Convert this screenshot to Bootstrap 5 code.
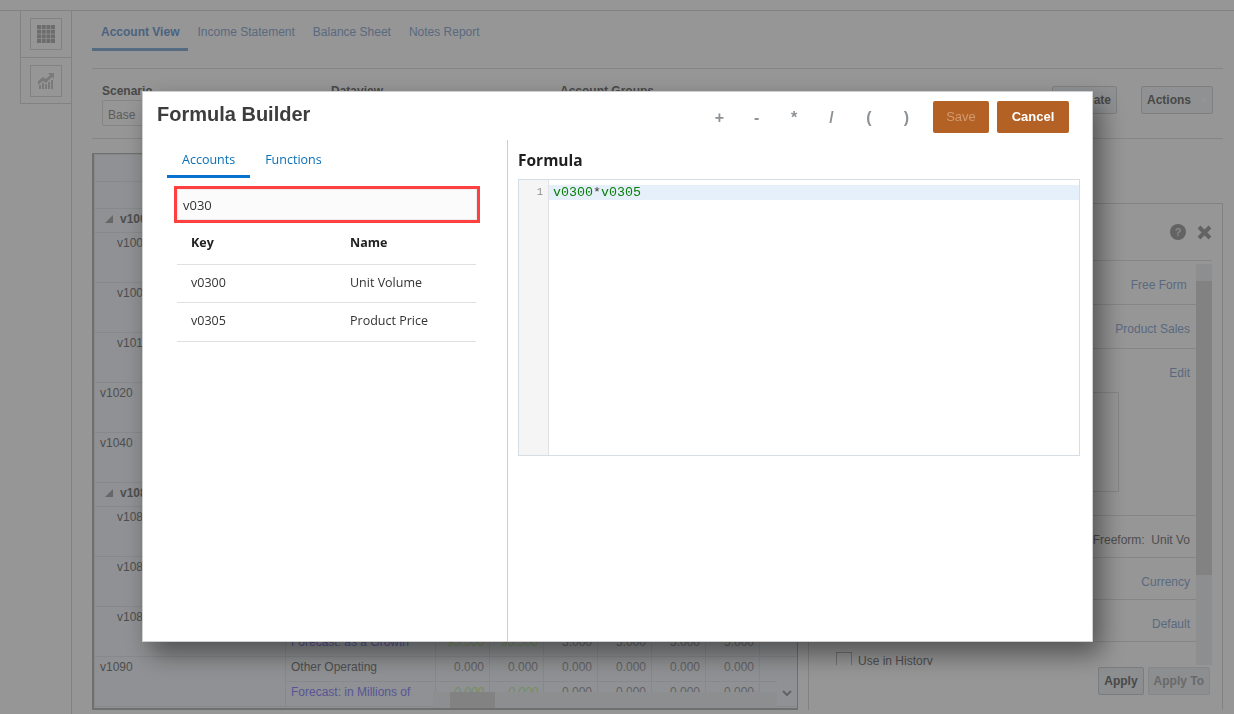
<!DOCTYPE html>
<html lang="en">
<head>
<meta charset="utf-8">
<title>Formula Builder</title>
<link href="https://cdn.jsdelivr.net/npm/bootstrap@5.3.0/dist/css/bootstrap.min.css" rel="stylesheet">
<style>
html,body{height:714px;overflow:hidden}
body{background:#fff;font-family:"Liberation Sans",Arial,sans-serif;font-size:12px;color:#868686;padding-top:10px}
.shell{height:704px;border-top:1px solid #dedede}
.rail{width:51px;height:93px;margin-left:20px;border-left:1px solid #dedede;border-bottom:1px solid #dedede;flex:none}
.rail-cell{height:46px}
.rail-cell+.rail-cell{border-top:1px solid #dedede}
.rail-box{width:32px;height:32px;border:1px solid #dedede}
.main-area{width:1152px;border-left:1px solid #dedede;border-right:0;padding-left:20px;height:703px}
.top-tabs{height:58px;border-bottom:1px solid #e3e3e3;padding-top:13px;gap:0}
.top-tab{padding:0 9px;height:27px;line-height:17px;color:#98b4d8;font-size:12px;white-space:nowrap}
.top-tab.on{color:#7fa9d8;font-weight:700;border-bottom:3px solid #8fb6de}
.filter-bar{height:70px;border-bottom:1px solid #e3e3e3;padding:13px 10px 0;width:1131px}
.flt{width:229px;font-weight:700;color:#7c7c7c;font-size:12px}
.flt-sel{width:120px;height:26px;border:1px solid #e3e3e3;border-radius:2px;padding:5px;color:#9c9c9c;font-weight:400}
.act-btn{height:28px;border:1px solid #d8d8d8;border-radius:2px;background:#f5f7f9;color:#7c7c7c;font-weight:700;font-size:12px;padding:0 5px;display:flex;align-items:center;gap:10px}
.content-row{padding-top:14px;width:1131px;gap:10px}
.grid-wrap{width:706px;height:557px;border:1px solid #bcbebe;border-width:1px 1px 2px 2px;overflow:hidden;background:#f4f7fb;flex:none}
.acct{border-collapse:collapse;table-layout:fixed;width:704px}
.acct td{border:1px solid #e6e8ec;padding:3px 5px 0;vertical-align:top;overflow:hidden;white-space:nowrap;height:25px;font-size:12px;line-height:15px}
.acct tr.hd td{height:27px}
.acct tr.grp td{height:24px;font-weight:700;padding-left:24px}
.acct .ind{padding-left:22px}
.acct .num{text-align:right;color:#a8a8a8}
.acct .fc{color:#9890ff}
.acct .gr{color:#c8f0a4;font-style:italic}
.tri{display:inline-block;width:0;height:0;border-left:8px solid transparent;border-bottom:8px solid #b0b0b0;margin:0 7px 0 -14px}
.bar-h{position:absolute;left:339px;right:20px;bottom:0;height:16px;background:#eef1f4}
.bar-h i{position:absolute;left:17px;top:0;width:45px;height:16px;background:#dedede}
.bar-v{position:absolute;right:0;top:520px;bottom:16px;width:20px;text-align:center;background:#f4f7fb}
.pane{flex:1;height:507px;margin-top:50px;border:1px solid #dedede;border-bottom:0;position:relative}
.pane-head{height:56px;padding-right:10px;gap:11px}
.pane-body{height:405px;overflow:hidden;margin-right:10px;position:relative}
.pane-row{border-top:1px solid #e3e3e3;padding-right:22px;text-align:right;color:#98b4d8;height:44px;padding-top:15px;margin-left:20px}
.pane-row.plain{color:#868686}
.edit-box{width:170px;height:100px;border:1px solid #e3e3e3;margin:10px 0 0 120px}
.hist{padding:10px 0 0 7px;color:#868686;margin-left:20px;border-top:1px solid #e3e3e3;gap:6px}
.hist i{display:block;width:16px;height:16px;border:1px solid #bcbebe}
.bar-r{position:absolute;right:0;top:4px;bottom:0;width:16px;background:#f0f2f4}
.bar-r b{position:absolute;left:0;right:0;top:17px;height:294px;background:#dedede}
.pane-foot{padding:2px 12px 0 0;gap:4px}
.foot-btn{height:28px;border:1px solid #d0d4d8;border-radius:2px;background:#eef1f4;color:#7c7c7c;font-weight:700;padding:0 5px;font-size:12px;line-height:26px}
.foot-btn.off{color:#b4b4b4;border-color:#e6e6e6}
.scrim{position:fixed;inset:0;background:rgba(0,0,0,.41)}
.fb-modal{position:fixed;left:142px;top:91px;width:951px;height:551px;background:#fff;border:1px solid #cfcfcf;border-radius:0;box-shadow:8px 12px 24px rgba(0,0,0,.45);color:#333;font-family:"Open Sans","Noto Sans",sans-serif}
.fb-top{height:48px;padding:9px 23px 0 14px}
.fb-title{font:700 20px/26px "Liberation Sans",Arial,sans-serif;color:#3d3d3d;margin:0}
.ops{font:700 16px/20px "Liberation Sans",Arial,sans-serif;color:#8c9296;margin-top:7px;margin-right:0}
.ops span{width:37.4px;text-align:center}
.fb-btn{height:32px;border:0;border-radius:2px;background:#b46126;font:700 13px/32px "Liberation Sans",Arial,sans-serif;color:#fff;padding:0;text-align:center}
.fb-btn.save{width:56px;color:#d39a70;font-weight:400;margin:0 8px 0 0}
.fb-btn.cancel{width:72px}
.fb-body{height:501px}
.fb-left{width:365px;border-right:1px solid #c6ced0;padding:0 0 0 24px;flex:none}
.fb-tabs{gap:0;height:38px;font-size:12.5px;color:#0572ce}
.fb-tab{padding:11px 15px 0;height:38px;line-height:18px;color:#0a6fb5}
.fb-tab.on{border-bottom:3px solid #0572ce}
.fb-search{display:block;width:306px;height:37px;margin:8px 0 0 7px;border:3px solid #ff4040;background:#fbfbfb;box-shadow:inset 0 0 0 1px #ececec;font:13px/31px "Open Sans",sans-serif;color:#333;padding:0 6px;outline:0}
.fb-table{width:299px;margin-left:10px;border-collapse:collapse;font-size:12.5px;color:#333}
.fb-table th,.fb-table td{border-bottom:1px solid #e0e0e0;padding:0 14px;height:38.5px;font-weight:400}
.fb-table th{font-weight:700;height:41px;color:#222;padding-top:0}
.fb-table .c1{width:159px}
.fb-right{padding:0 12px 0 10px;flex:1}
.fb-h{font:700 15.5px/20px "Open Sans",sans-serif;color:#1f1f1f;margin:10px 0 9px}
.editor{width:562px;height:277px;border:1px solid #d5dde5;background:#fff;padding-top:0}
.gutter{width:30px;border-right:1px solid #dfe3e6;background:#f5f5f5;text-align:right;padding:5px 5px 0 0;font:10.5px/15px "Liberation Mono",monospace;color:#8d8d8d;flex:none}
.code-pane{flex:1;padding-top:5px}
.code-line{height:15px;background:#e6f0fb;padding-left:4px;font:13.33px/15px "Liberation Mono",monospace;color:#0a7d0a}
.code-line b{color:#333;font-weight:400}
</style>
</head>
<body>
<div class="shell d-flex">
  <div class="rail">
    <div class="rail-cell d-flex align-items-center justify-content-center">
      <div class="rail-box d-flex align-items-center justify-content-center">
        <svg width="18" height="18" viewBox="0 0 18 18" fill="#b9b9b9"><rect width="4" height="4"/><rect x="4.7" width="4" height="4"/><rect x="9.4" width="4" height="4"/><rect x="14" width="4" height="4"/><rect y="4.7" width="4" height="4"/><rect x="4.7" y="4.7" width="4" height="4"/><rect x="9.4" y="4.7" width="4" height="4"/><rect x="14" y="4.7" width="4" height="4"/><rect y="9.4" width="4" height="4"/><rect x="4.7" y="9.4" width="4" height="4"/><rect x="9.4" y="9.4" width="4" height="4"/><rect x="14" y="9.4" width="4" height="4"/><rect y="14" width="4" height="4"/><rect x="4.7" y="14" width="4" height="4"/><rect x="9.4" y="14" width="4" height="4"/><rect x="14" y="14" width="4" height="4"/></svg>
      </div>
    </div>
    <div class="rail-cell d-flex align-items-center justify-content-center">
      <div class="rail-box d-flex align-items-center justify-content-center">
        <svg width="18" height="17" viewBox="0 0 18 17" fill="#d0d0d0"><path d="M1 9l5-4 3 2 4-4-2-2h6v6l-2-2-6 6-3-2-5 4z"/><rect x="2" y="13" width="2" height="4"/><rect x="5" y="11" width="2" height="6"/><rect x="8" y="12" width="2" height="5"/><rect x="11" y="10" width="2" height="7"/><rect x="14" y="8" width="2" height="9"/></svg>
      </div>
    </div>
  </div>
  <div class="main-area">
    <div class="top-tabs d-flex">
      <div class="top-tab on">Account View</div>
      <div class="top-tab">Income Statement</div>
      <div class="top-tab">Balance Sheet</div>
      <div class="top-tab">Notes Report</div>
    </div>
    <div class="filter-bar d-flex">
      <div class="flt">Scenario<div class="flt-sel">Base</div></div>
      <div class="flt">Dataview</div>
      <div class="flt">Account Groups</div>
      <div class="ms-auto d-flex gap-4 pe-0 align-items-start">
        <div class="act-btn mt-1">Calculate</div>
        <div class="act-btn mt-1">Actions <span class="text-white-50">▾</span></div>
      </div>
    </div>
    <div class="content-row d-flex">
      <div class="grid-wrap position-relative">
        <table class="acct">
          <colgroup><col style="width:191px"><col style="width:150px"><col style="width:54px"><col style="width:54px"><col style="width:54px"><col style="width:54px"><col style="width:54px"><col style="width:54px"><col></colgroup>
          <tr class="hd"><td colspan="9"></td></tr>
          <tr class="hd"><td colspan="9"></td></tr>
          <tr class="grp"><td colspan="9"><span class="tri"></span>v1000</td></tr>
          <tr><td rowspan="2" class="ind">v1000</td><td colspan="8"></td></tr><tr><td colspan="8"></td></tr>
          <tr><td rowspan="2" class="ind">v1005</td><td colspan="8"></td></tr><tr><td colspan="8"></td></tr>
          <tr><td rowspan="2" class="ind">v1010</td><td colspan="8"></td></tr><tr><td colspan="8"></td></tr>
          <tr><td rowspan="2">v1020</td><td colspan="8"></td></tr><tr><td colspan="8"></td></tr>
          <tr><td rowspan="2">v1040</td><td colspan="8"></td></tr><tr><td colspan="8"></td></tr>
          <tr class="grp"><td colspan="9"><span class="tri"></span>v1080</td></tr>
          <tr><td rowspan="2" class="ind">v1081</td><td colspan="8"></td></tr><tr><td colspan="8"></td></tr>
          <tr><td rowspan="2" class="ind">v1082</td><td colspan="8"></td></tr><tr><td colspan="8"></td></tr>
          <tr><td rowspan="2" class="ind">v1083</td><td colspan="8"></td></tr>
          <tr><td class="fc">Forecast: as a Growth</td><td class="num gr">95.500</td><td class="num gr">95.500</td><td class="num">5.000</td><td class="num">5.000</td><td class="num">5.000</td><td class="num">5.000</td><td></td></tr>
          <tr><td rowspan="2">v1090</td><td>Other Operating</td><td class="num">0.000</td><td class="num">0.000</td><td class="num">0.000</td><td class="num">0.000</td><td class="num">0.000</td><td class="num">0.000</td><td></td></tr>
          <tr><td class="fc">Forecast: in Millions of</td><td class="num gr">0.000</td><td class="num gr">0.000</td><td class="num">0.000</td><td class="num">0.000</td><td class="num">0.000</td><td class="num">0.000</td><td></td></tr>
        </table>
        <div class="bar-h"><i></i></div>
        <div class="bar-v"><svg width="10" height="7" viewBox="0 0 10 7" class="mt-3"><path d="M1 1l4 4 4-4" fill="none" stroke="#a8a8a8" stroke-width="2"/></svg></div>
      </div>
      <div class="pane">
        <div class="pane-head d-flex align-items-center justify-content-end">
          <svg width="16" height="16" viewBox="0 0 16 16"><circle cx="8" cy="8" r="8" fill="#a9a9a9"/><text x="8" y="12" text-anchor="middle" font-size="11" font-weight="700" font-family="Liberation Sans" fill="#e4e4e4">?</text></svg>
          <svg width="15" height="15" viewBox="0 0 15 15"><path d="M2 2l11 11M13 2L2 13" stroke="#a9a9a9" stroke-width="4"/></svg>
        </div>
        <div class="pane-body">
          <div class="pane-row">Free Form&nbsp;</div>
          <div class="pane-row">Product Sales</div>
          <div class="pane-row" style="height:167px;">Edit<div class="edit-box"></div></div>
          <div class="pane-row plain" style="height:42px">Freeform:&nbsp; Unit Vo</div>
          <div class="pane-row" style="height:42px">Currency</div>
          <div class="pane-row" style="height:42px">Default</div>
          <div class="hist d-flex"><i></i><span>Use in History</span></div>
          <div class="bar-r"><b></b></div>
        </div>
        <div class="pane-foot d-flex justify-content-end">
          <div class="foot-btn">Apply</div>
          <div class="foot-btn off">Apply To</div>
        </div>
      </div>
    </div>
  </div>
</div>
<div class="scrim"></div>
<div class="fb-modal">
  <div class="fb-top d-flex">
    <h1 class="fb-title">Formula Builder</h1>
    <div class="ops d-flex ms-auto"><span>+</span><span>-</span><span>*</span><span>/</span><span>(</span><span>)</span></div>
    <button type="button" class="fb-btn save ms-2">Save</button>
    <button type="button" class="fb-btn cancel">Cancel</button>
  </div>
  <div class="fb-body d-flex">
    <div class="fb-left">
      <div class="fb-tabs d-flex">
        <div class="fb-tab on">Accounts</div>
        <div class="fb-tab">Functions</div>
      </div>
      <input class="fb-search" type="text" value="v030">
      <table class="fb-table">
        <tr><th class="c1">Key</th><th>Name</th></tr>
        <tr><td>v0300</td><td>Unit Volume</td></tr>
        <tr><td>v0305</td><td>Product Price</td></tr>
      </table>
    </div>
    <div class="fb-right">
      <div class="fb-h">Formula</div>
      <div class="editor d-flex">
        <div class="gutter">1</div>
        <div class="code-pane"><div class="code-line">v0300<b>*</b>v0305</div></div>
      </div>
    </div>
  </div>
</div>
<script src="https://cdn.jsdelivr.net/npm/bootstrap@5.3.0/dist/js/bootstrap.bundle.min.js"></script>
</body>
</html>
